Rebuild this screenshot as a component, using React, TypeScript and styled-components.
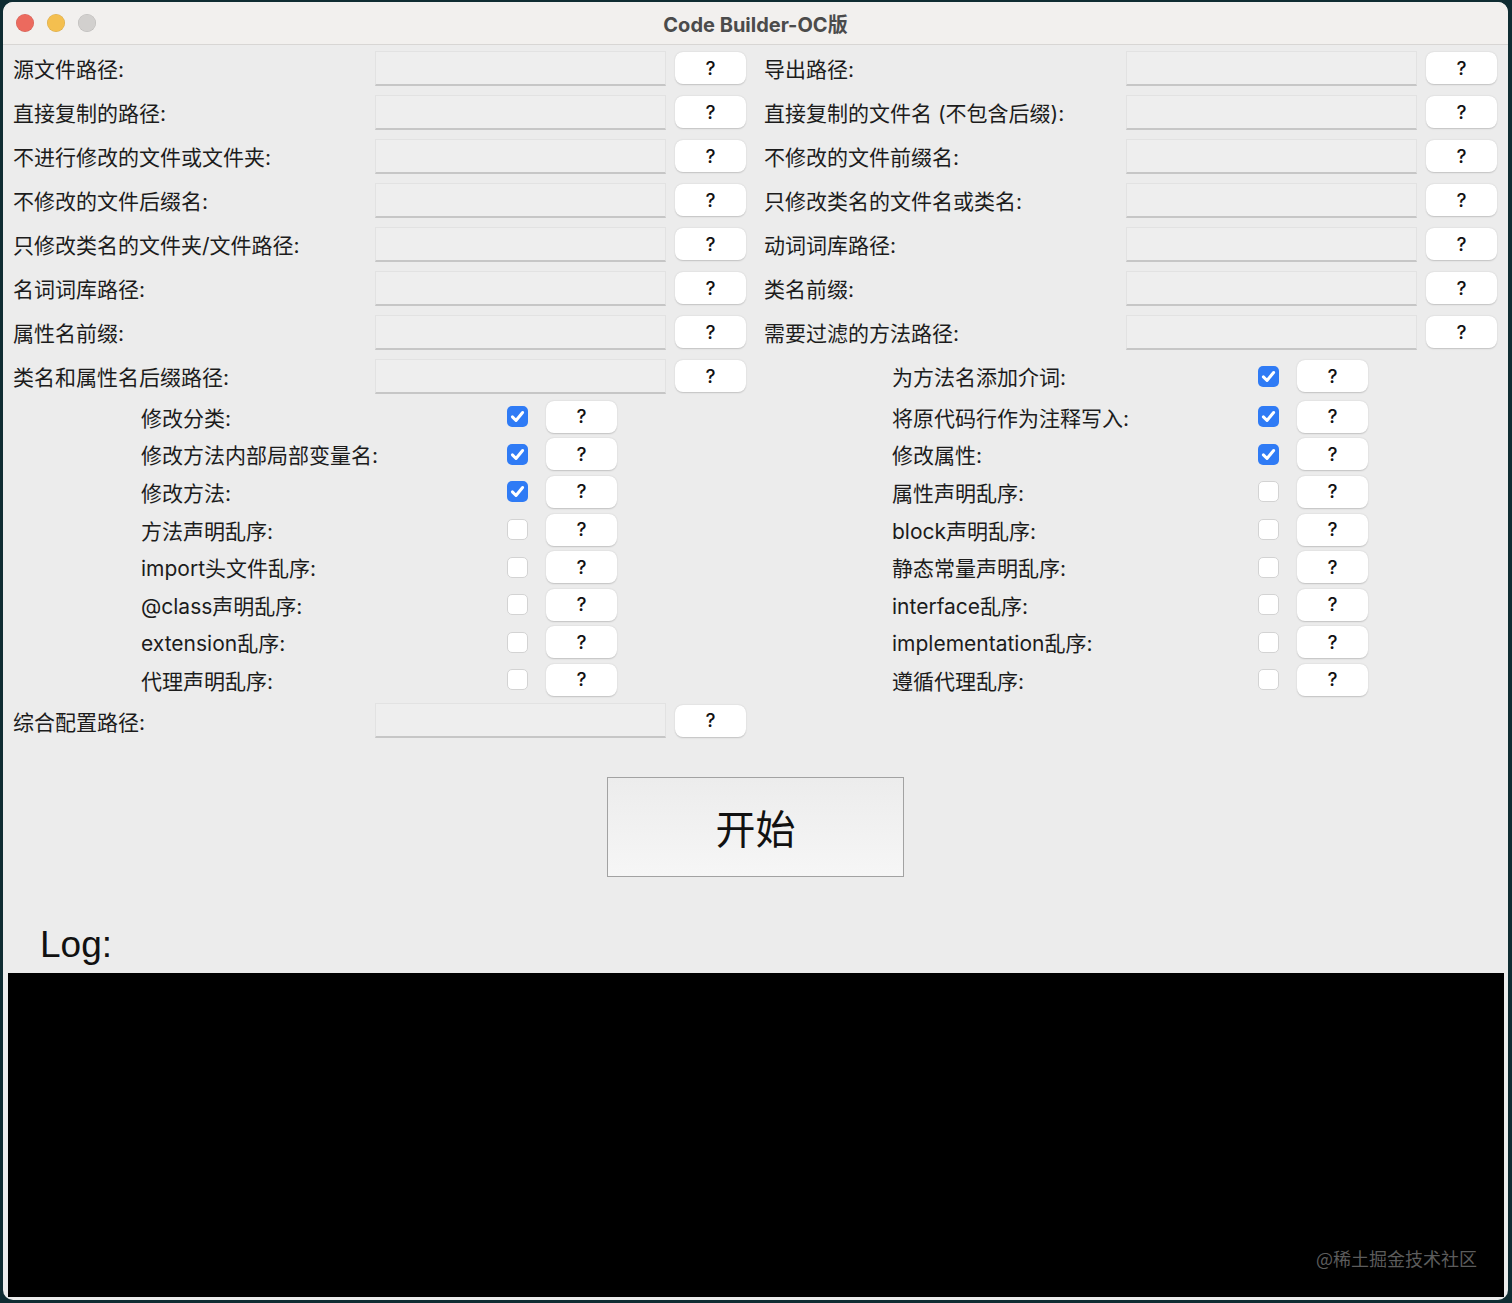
import React from 'react';
import styled, { createGlobalStyle } from 'styled-components';

const GlobalStyle = createGlobalStyle`
  html, body {
    margin: 0;
    padding: 0;
    background: #0f2c32;
  }
  body {
    font-family: Inter, "Noto Sans CJK SC", sans-serif;
  }
  #root {
    padding: 2px 0 0 3px;
  }
`;

const Window = styled.div`
  width: 1505px;
  height: 1298px;
  background: #ececec;
  border-radius: 10px;
  overflow: hidden;
  display: flex;
  flex-direction: column;
`;

const TitleBar = styled.div`
  height: 42px;
  flex-shrink: 0;
  background: #f2f0ee;
  border-bottom: 1px solid #d8d6d4;
  display: grid;
  grid-template-columns: 120px 1fr 120px;
  align-items: center;
`;

const Lights = styled.div`
  display: flex;
  gap: 13px;
  padding-left: 13px;
`;

const Light = styled.span<{ $color: string }>`
  width: 18px;
  height: 18px;
  border-radius: 50%;
  background: ${(p) => p.$color};
  box-shadow: inset 0 0 0 0.5px rgba(0, 0, 0, 0.12);
`;

const Title = styled.div`
  text-align: center;
  font-size: 20px;
  font-weight: 700;
  color: #4b4b4b;
`;

const Form = styled.div`
  display: grid;
  grid-template-columns: 733px 733px;
  column-gap: 18px;
  padding: 1px 11px 0 10px;
`;

const Column = styled.div`
  display: flex;
  flex-direction: column;
`;

const FieldRow = styled.div`
  height: 44px;
  display: grid;
  grid-template-columns: 353px 291px 71px;
  column-gap: 9px;
  align-items: center;
`;

const Label = styled.span`
  font-size: 21px;
  color: #1c1c1c;
  white-space: nowrap;
`;

const TextInput = styled.div`
  height: 35px;
  box-sizing: border-box;
  background: #eeeeee;
  border: 1px solid #e2e2e2;
  border-bottom: 2px solid #c6c6c6;
`;

const HelpButton = styled.button`
  height: 32px;
  width: 71px;
  border: 0;
  border-radius: 8px;
  background: #ffffff;
  box-shadow: 0 0.5px 1.5px rgba(0, 0, 0, 0.18);
  font-family: Inter, "Noto Sans CJK SC", sans-serif;
  font-size: 19px;
  font-weight: 500;
  color: #111;
  padding: 0;
`;

const CheckRow = styled.div<{ $height: number }>`
  height: ${(p) => p.$height}px;
  display: grid;
  grid-template-columns: 348px 21px 71px;
  column-gap: 18px;
  align-items: center;
  padding-left: 128px;
`;

const Box = styled.span<{ $on: boolean }>`
  width: 21px;
  height: 21px;
  box-sizing: border-box;
  border-radius: 5px;
  display: flex;
  align-items: center;
  justify-content: center;
  background: ${(p) => (p.$on ? '#2f7bf5' : '#ffffff')};
  border: ${(p) => (p.$on ? '0' : '1px solid #d3d3d3')};
`;

const StartWrap = styled.div`
  display: flex;
  justify-content: center;
  margin-top: 34px;
`;

const StartButton = styled.button`
  width: 297px;
  height: 100px;
  border: 1px solid #a2a2a2;
  background: linear-gradient(#ececec, #f6f6f6);
  font-family: "Noto Sans CJK SC", sans-serif;
  font-size: 40px;
  color: #111;
  padding: 0;
`;

const LogTitle = styled.div`
  margin: 46px 0 6px 37px;
  height: 44px;
  line-height: 44px;
  font-family: "Liberation Sans", sans-serif;
  font-size: 37px;
  color: #111;
`;

const LogArea = styled.div`
  flex: 1;
  margin: 0 4px 3px 5px;
  background: #000;
  display: flex;
  align-items: flex-end;
  justify-content: flex-end;
  padding: 0 27px 26px 0;
`;

const Watermark = styled.span`
  font-family: "Noto Sans CJK SC", sans-serif;
  font-size: 18px;
  color: #5c5c5c;
`;

const Check = ({ on }: { on: boolean }) => (
  <Box $on={on}>
    {on && (
      <svg width="17" height="17" viewBox="0 0 16 16">
        <path d="M3.2 8.4 L6.6 11.8 L12.8 4.2" fill="none" stroke="#fff" strokeWidth="2.8" strokeLinecap="round" strokeLinejoin="round" />
      </svg>
    )}
  </Box>
);

const Field = ({ label }: { label: string }) => (
  <FieldRow>
    <Label>{label}</Label>
    <TextInput />
    <HelpButton>?</HelpButton>
  </FieldRow>
);

const Option = ({ label, on, height = 37.6 }: { label: string; on: boolean; height?: number }) => (
  <CheckRow $height={height}>
    <Label>{label}</Label>
    <Check on={on} />
    <HelpButton>?</HelpButton>
  </CheckRow>
);

const leftFields = [
  '源文件路径:',
  '直接复制的路径:',
  '不进行修改的文件或文件夹:',
  '不修改的文件后缀名:',
  '只修改类名的文件夹/文件路径:',
  '名词词库路径:',
  '属性名前缀:',
  '类名和属性名后缀路径:',
];

const rightFields = [
  '导出路径:',
  '直接复制的文件名 (不包含后缀):',
  '不修改的文件前缀名:',
  '只修改类名的文件名或类名:',
  '动词词库路径:',
  '类名前缀:',
  '需要过滤的方法路径:',
];

const leftOptions: [string, boolean][] = [
  ['修改分类:', true],
  ['修改方法内部局部变量名:', true],
  ['修改方法:', true],
  ['方法声明乱序:', false],
  ['import头文件乱序:', false],
  ['@class声明乱序:', false],
  ['extension乱序:', false],
  ['代理声明乱序:', false],
];

const rightOptions: [string, boolean][] = [
  ['将原代码行作为注释写入:', true],
  ['修改属性:', true],
  ['属性声明乱序:', false],
  ['block声明乱序:', false],
  ['静态常量声明乱序:', false],
  ['interface乱序:', false],
  ['implementation乱序:', false],
  ['遵循代理乱序:', false],
];

const App = () => {
  return (
    <>
      <GlobalStyle />
      <Window>
        <TitleBar>
          <Lights>
            <Light $color="#ec6a5e" />
            <Light $color="#f4bf4f" />
            <Light $color="#d2d0ce" />
          </Lights>
          <Title>Code Builder-OC版</Title>
          <span />
        </TitleBar>
        <Form>
          <Column>
            {leftFields.map((l) => (
              <Field key={l} label={l} />
            ))}
            {leftOptions.map(([l, on]) => (
              <Option key={l} label={l} on={on} />
            ))}
            <Field label="综合配置路径:" />
          </Column>
          <Column>
            {rightFields.map((l) => (
              <Field key={l} label={l} />
            ))}
            <Option label="为方法名添加介词:" on height={44} />
            {rightOptions.map(([l, on]) => (
              <Option key={l} label={l} on={on} />
            ))}
          </Column>
        </Form>
        <StartWrap>
          <StartButton>开始</StartButton>
        </StartWrap>
        <LogTitle>Log:</LogTitle>
        <LogArea>
          <Watermark>@稀土掘金技术社区</Watermark>
        </LogArea>
      </Window>
    </>
  );
};

export default App;
